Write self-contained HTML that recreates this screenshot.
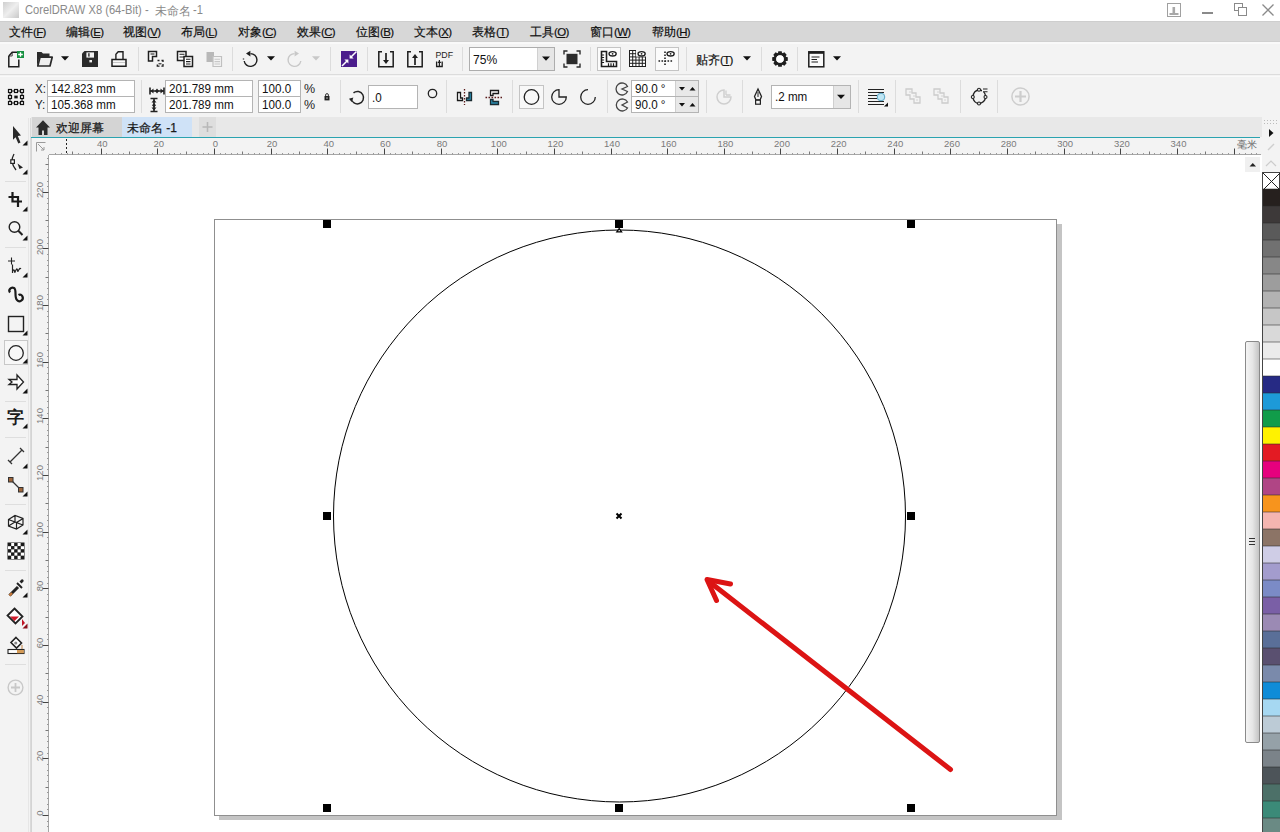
<!DOCTYPE html><html><head><meta charset="utf-8"><style>
*{margin:0;padding:0;box-sizing:border-box}
html,body{width:1280px;height:832px;overflow:hidden;background:#f3f3f3;font-family:"Liberation Sans",sans-serif;position:relative}
.abs{position:absolute}
svg{position:absolute;overflow:visible}
.mi{position:absolute;top:24px;font-size:12px;color:#111;white-space:nowrap;letter-spacing:0px;-webkit-text-stroke:0.2px #111}
.n{display:inline-block;transform:scaleX(.93);transform-origin:0 50%}
.pp{letter-spacing:-0.7px;font-size:11.5px}
.sepv{position:absolute;width:1px;background:#dcdcdc}
.box{position:absolute;background:#fff;border:1px solid #b4b4b4;font-size:12.5px;color:#111;white-space:nowrap;overflow:hidden}
.rl{position:absolute;font-size:9.5px;color:#7a7a7a;white-space:nowrap}
</style></head><body>
<div class="abs" style="left:0;top:0;width:1280px;height:21px;background:#fff"></div>
<div class="abs" style="left:3px;top:2px;width:16px;height:16px;background:linear-gradient(135deg,#cfcfcf,#eee 50%,#c8c8c8)"></div>
<div class="abs" style="left:25px;top:3px;font-size:12px;color:#8a8a8a;white-space:nowrap"><span class="n">CorelDRAW X8 (64-Bit) -</span></div><div class="abs" style="left:155px;top:3px;font-size:12px;color:#8a8a8a;white-space:nowrap">未命名</div><div class="abs" style="left:193px;top:3px;font-size:12px;color:#8a8a8a;white-space:nowrap"><span class="n">-1</span></div>
<svg style="left:1160px;top:0" width="120" height="21"><rect x="7.5" y="3.5" width="13" height="13" fill="none" stroke="#a0a0a0"/><path d="M9.5 14h9" stroke="#a8a8a8" stroke-width="2"/><path d="M13.8 7v6" stroke="#a8a8a8" stroke-width="2.6"/><rect x="42" y="12" width="11" height="2" fill="#8a8a8a"/><rect x="74.5" y="3.5" width="8" height="7" fill="#fff" stroke="#8a8a8a"/><rect x="78.5" y="7.5" width="8" height="8" fill="#fff" stroke="#8a8a8a"/><path d="M102.5 4.5l11 11M113.5 4.5l-11 11" stroke="#8a8a8a" stroke-width="1.3"/></svg>
<div class="abs" style="left:0;top:21px;width:1280px;height:21px;background:#d7d7d7"></div>
<div class="mi" style="left:9px">文件<span class="pp">(<u>F</u>)</span></div>
<div class="mi" style="left:66px">编辑<span class="pp">(<u>E</u>)</span></div>
<div class="mi" style="left:123px">视图<span class="pp">(<u>V</u>)</span></div>
<div class="mi" style="left:181px">布局<span class="pp">(<u>L</u>)</span></div>
<div class="mi" style="left:238px">对象<span class="pp">(<u>C</u>)</span></div>
<div class="mi" style="left:297px">效果<span class="pp">(<u>C</u>)</span></div>
<div class="mi" style="left:356px">位图<span class="pp">(<u>B</u>)</span></div>
<div class="mi" style="left:414px">文本<span class="pp">(<u>X</u>)</span></div>
<div class="mi" style="left:472px">表格<span class="pp">(<u>T</u>)</span></div>
<div class="mi" style="left:530px">工具<span class="pp">(<u>O</u>)</span></div>
<div class="mi" style="left:590px">窗口<span class="pp">(<u>W</u>)</span></div>
<div class="mi" style="left:652px">帮助<span class="pp">(<u>H</u>)</span></div>
<div class="abs" style="left:0;top:42px;width:1280px;height:33px;background:#f3f3f3;border-bottom:1px solid #dcdcdc"></div>
<div class="abs" style="left:0;top:42px;width:1280px;height:2px;background:#f9f9f9"></div>
<div class="abs" style="left:0;top:21px;width:1280px;height:1px;background:#cecece"></div>
<div class="abs" style="left:0;top:41px;width:1280px;height:1px;background:#d0d0d0"></div>
<div class="sepv" style="left:138px;top:47px;height:24px"></div>
<div class="sepv" style="left:232px;top:47px;height:24px"></div>
<div class="sepv" style="left:330px;top:47px;height:24px"></div>
<div class="sepv" style="left:367px;top:47px;height:24px"></div>
<div class="sepv" style="left:462px;top:47px;height:24px"></div>
<div class="sepv" style="left:590px;top:47px;height:24px"></div>
<div class="sepv" style="left:686px;top:47px;height:24px"></div>
<div class="sepv" style="left:761px;top:47px;height:24px"></div>
<div class="sepv" style="left:797px;top:47px;height:24px"></div>
<svg style="left:7px;top:50px" width="18" height="18"><path d="M1.8 6L5.2 2.2H10.2M11.8 9.5v7.3H1.8V6" fill="none" stroke="#1e1e1e" stroke-width="1.5"/><path d="M5.2 2.2V6H1.8" fill="none" stroke="#1e1e1e" stroke-width="0.8"/><rect x="10" y="1" width="7" height="7" fill="#169040"/><path d="M13.5 2.2v4.6M11.2 4.5h4.6" stroke="#fff" stroke-width="1.3"/></svg>
<svg style="left:36px;top:50px" width="18" height="18"><path d="M1 16.8V2h4.5l1.5 1.5h6.5v3.5H3.5L1 16.8Z" fill="#2a2a2a"/><path d="M1.8 16L4 7.2h12.2L14 16Z" fill="#eeeeee" stroke="#2a2a2a" stroke-width="1.7" stroke-linejoin="round"/></svg>
<svg style="left:60px;top:55px" width="10" height="6"><path d="M1 1.2h8L5 5.4Z" fill="#111"/></svg>
<svg style="left:81px;top:50px" width="18" height="18"><path d="M3.5 1H17V17H1V3.5Z" fill="#2b2b2b"/><rect x="5.4" y="2.4" width="7.6" height="5.2" fill="#f3f3f3"/><rect x="7.2" y="3.2" width="1.4" height="3.4" fill="#2b2b2b"/><rect x="8.4" y="10" width="2.6" height="2.4" fill="#f3f3f3"/></svg>
<svg style="left:110px;top:50px" width="18" height="18"><path d="M5.9 10V4.2L8.2 1.8h4.8V10" fill="#f6f6f6" stroke="#1e1e1e" stroke-width="1.4"/><path d="M2 9.5h14v6.8H2Z" fill="#fafafa" stroke="#1e1e1e" stroke-width="1.5"/><path d="M3 12.5h12" stroke="#bbb" stroke-width="0.8"/></svg>
<svg style="left:147px;top:50px" width="18" height="18"><path d="M1.5 1.5h8v5h-4v4.5h-4Z" fill="#fff" stroke="#1e1e1e" stroke-width="1.5"/><path d="M3.5 4h4" stroke="#1e1e1e" stroke-width="1.1"/><path d="M10.5 10.5h2M14.5 10.5h1.5v1.5M16 14v2.2h-1.6M12.5 16.2h-2.2v-1.6" fill="none" stroke="#1e1e1e" stroke-width="1.3"/><path d="M11.5 13.8h3" stroke="#1e1e1e" stroke-width="1.1"/></svg>
<svg style="left:176px;top:50px" width="18" height="18"><path d="M1.5 1.5h8.5v9H1.5Z" fill="#fff" stroke="#1e1e1e" stroke-width="1.5"/><path d="M3.5 4.2h5M3.5 7h5" stroke="#1e1e1e" stroke-width="1.1"/><path d="M8 6.5h8.5v10H8Z" fill="#fff" stroke="#1e1e1e" stroke-width="1.5"/><path d="M10 9.2h4.5M10 11.6h4.5M10 14h4.5" stroke="#1e1e1e" stroke-width="1.1"/></svg>
<svg style="left:205px;top:50px" width="18" height="18"><path d="M1.5 2h7.5v10H1.5Z" fill="#b8b8b8"/><path d="M8 6.5h8.5v10H8Z" fill="#f3f3f3" stroke="#c0c0c0" stroke-width="1.2"/><path d="M9.5 9.2h5.5M9.5 11.6h5.5M9.5 14h5.5" stroke="#c8c8c8" stroke-width="1.1"/></svg>
<svg style="left:241px;top:50px" width="18" height="18"><path d="M9.5 3.6A6.4 6.4 0 1 1 3.2 11" fill="none" stroke="#1e1e1e" stroke-width="1.4"/><path d="M9.4 0.8L5 3.6L9.4 6.4Z" fill="#1e1e1e"/><path d="M2.5 8.5v1" stroke="#1e1e1e" stroke-width="1.4"/></svg>
<svg style="left:266px;top:55px" width="10" height="6"><path d="M1 1.2h8L5 5.4Z" fill="#111"/></svg>
<svg style="left:286px;top:50px" width="18" height="18"><path d="M8.5 3.6A6.4 6.4 0 1 0 14.8 11" fill="none" stroke="#c8c8c8" stroke-width="1.4"/><path d="M8.6 0.8L13 3.6L8.6 6.4Z" fill="#c8c8c8"/></svg>
<svg style="left:311px;top:55px" width="10" height="6"><path d="M1 1.2h8L5 5.4Z" fill="#c8c8c8"/></svg>
<svg style="left:340px;top:50px" width="18" height="18"><rect x="1" y="1" width="16" height="16" fill="#4b1d8c"/><path d="M16.5 1.5L10.5 7.5M2 16L7.5 10.5" stroke="#fff" stroke-width="1.5"/><path d="M9.6 4.4v4h4Z" fill="#fff"/><path d="M8.4 13.6v-4h-4Z" fill="#fff"/></svg>
<svg style="left:377px;top:50px" width="18" height="18"><path d="M5 1.8H1.8v15h14.4v-15H13" fill="none" stroke="#1e1e1e" stroke-width="1.5"/><path d="M9 3v8" stroke="#1e1e1e" stroke-width="1.7"/><path d="M6 10h6L9 14Z" fill="#1e1e1e"/></svg>
<svg style="left:406px;top:50px" width="18" height="18"><path d="M5 1.8H1.8v15h14.4v-15H13" fill="none" stroke="#1e1e1e" stroke-width="1.5"/><path d="M9 7v8" stroke="#1e1e1e" stroke-width="1.7"/><path d="M6 8h6L9 4Z" fill="#1e1e1e"/></svg>
<svg style="left:434px;top:50px" width="20" height="18"><text x="1.5" y="8" font-family="Liberation Sans" font-size="8.8" fill="#1e1e1e">PDF</text><path d="M2.6 11.5v5h5.6v-5" fill="none" stroke="#1e1e1e" stroke-width="1.3"/><path d="M5.4 10v6" stroke="#1e1e1e" stroke-width="1.2"/><path d="M3.4 13l2-2.5l2 2.5Z" fill="#1e1e1e"/></svg>
<div class="box" style="left:469px;top:47px;width:86px;height:24px;border-color:#adadad"><span class="n" style="position:absolute;left:3px;top:4px;font-size:13px">75%</span><div style="position:absolute;left:67px;top:0;width:17px;height:22px;background:#e6e6e6;border-left:1px solid #d0d0d0"></div></div>
<svg style="left:541px;top:56px" width="10" height="6"><path d="M1 0.6h8L5 4.8Z" fill="#111"/></svg>
<svg style="left:563px;top:50px" width="18" height="18"><rect x="3.5" y="3.8" width="11" height="10.4" fill="#2b2b2b"/><path d="M1 4.5V1h3.5M13.5 1H17v3.5M17 13.5V17h-3.5M4.5 17H1v-3.5" fill="none" stroke="#2b2b2b" stroke-width="1.4"/></svg>
<div class="abs" style="left:597px;top:47px;width:24px;height:24px;border:1px solid #c4c4c4;background:#fbfbfb"></div>
<div class="abs" style="left:655px;top:47px;width:24px;height:24px;border:1px solid #c4c4c4;background:#fbfbfb"></div>
<svg style="left:600px;top:50px" width="18" height="18"><path d="M1.5 1.5v15h15v-5H6.5V1.5Z" fill="#fff" stroke="#1e1e1e" stroke-width="1.6"/><path d="M1.5 5h2.6M1.5 7.5h2.6M1.5 10h2.6M1.5 12.5h2.6M8.5 16v-2.8M11 16v-2.8M13.5 16v-2.8" stroke="#1e1e1e" stroke-width="1.2"/><ellipse cx="12.6" cy="3.8" rx="3.6" ry="2.2" fill="#fff" stroke="#1e1e1e" stroke-width="1.3"/><circle cx="12.6" cy="3.8" r="0.9" fill="#1e1e1e"/></svg>
<svg style="left:629px;top:50px" width="18" height="18"><rect x="0" y="0" width="17" height="17" fill="#1e1e1e"/><rect x="1.0" y="1.0" width="2.2" height="2.2" fill="#fff"/><rect x="1.0" y="4.2" width="2.2" height="2.2" fill="#fff"/><rect x="1.0" y="7.4" width="2.2" height="2.2" fill="#fff"/><rect x="1.0" y="10.6" width="2.2" height="2.2" fill="#fff"/><rect x="1.0" y="13.8" width="2.2" height="2.2" fill="#fff"/><rect x="4.2" y="1.0" width="2.2" height="2.2" fill="#fff"/><rect x="4.2" y="4.2" width="2.2" height="2.2" fill="#fff"/><rect x="4.2" y="7.4" width="2.2" height="2.2" fill="#fff"/><rect x="4.2" y="10.6" width="2.2" height="2.2" fill="#fff"/><rect x="4.2" y="13.8" width="2.2" height="2.2" fill="#fff"/><rect x="7.4" y="1.0" width="2.2" height="2.2" fill="#fff"/><rect x="7.4" y="4.2" width="2.2" height="2.2" fill="#fff"/><rect x="7.4" y="7.4" width="2.2" height="2.2" fill="#fff"/><rect x="7.4" y="10.6" width="2.2" height="2.2" fill="#fff"/><rect x="7.4" y="13.8" width="2.2" height="2.2" fill="#fff"/><rect x="10.6" y="1.0" width="2.2" height="2.2" fill="#fff"/><rect x="10.6" y="4.2" width="2.2" height="2.2" fill="#fff"/><rect x="10.6" y="7.4" width="2.2" height="2.2" fill="#fff"/><rect x="10.6" y="10.6" width="2.2" height="2.2" fill="#fff"/><rect x="10.6" y="13.8" width="2.2" height="2.2" fill="#fff"/><rect x="13.8" y="1.0" width="2.2" height="2.2" fill="#fff"/><rect x="13.8" y="4.2" width="2.2" height="2.2" fill="#fff"/><rect x="13.8" y="7.4" width="2.2" height="2.2" fill="#fff"/><rect x="13.8" y="10.6" width="2.2" height="2.2" fill="#fff"/><rect x="13.8" y="13.8" width="2.2" height="2.2" fill="#fff"/><rect x="7" y="0" width="11" height="6.5" fill="#f3f3f3"/><ellipse cx="12.6" cy="3.8" rx="3.6" ry="2.2" fill="#fff" stroke="#1e1e1e" stroke-width="1.3"/><circle cx="12.6" cy="3.8" r="0.9" fill="#1e1e1e"/></svg>
<svg style="left:658px;top:50px" width="18" height="18"><path d="M7 1.5v15M0.5 11h15" stroke="#1e1e1e" stroke-width="1.6" stroke-dasharray="1.6 1.4"/><ellipse cx="12.6" cy="3.8" rx="3.6" ry="2.2" fill="#fff" stroke="#1e1e1e" stroke-width="1.3"/><circle cx="12.6" cy="3.8" r="0.9" fill="#1e1e1e"/></svg>
<div class="abs" style="left:696px;top:52px;font-size:12px;color:#111;white-space:nowrap;-webkit-text-stroke:0.2px #111">贴齐<span class="pp">(<u>T</u>)</span></div>
<svg style="left:742px;top:55px" width="10" height="6"><path d="M1 1.2h8L5 5.4Z" fill="#111"/></svg>
<svg style="left:771px;top:50px" width="18" height="18"><rect x="7.1" y="1.2" width="3.8" height="4" rx="0.6" fill="#1e1e1e" transform="rotate(0 9 9)"/><rect x="7.1" y="1.2" width="3.8" height="4" rx="0.6" fill="#1e1e1e" transform="rotate(45 9 9)"/><rect x="7.1" y="1.2" width="3.8" height="4" rx="0.6" fill="#1e1e1e" transform="rotate(90 9 9)"/><rect x="7.1" y="1.2" width="3.8" height="4" rx="0.6" fill="#1e1e1e" transform="rotate(135 9 9)"/><rect x="7.1" y="1.2" width="3.8" height="4" rx="0.6" fill="#1e1e1e" transform="rotate(180 9 9)"/><rect x="7.1" y="1.2" width="3.8" height="4" rx="0.6" fill="#1e1e1e" transform="rotate(225 9 9)"/><rect x="7.1" y="1.2" width="3.8" height="4" rx="0.6" fill="#1e1e1e" transform="rotate(270 9 9)"/><rect x="7.1" y="1.2" width="3.8" height="4" rx="0.6" fill="#1e1e1e" transform="rotate(315 9 9)"/><circle cx="9" cy="9" r="5.1" fill="none" stroke="#1e1e1e" stroke-width="2.6"/><circle cx="9" cy="9" r="3.8" fill="#fff"/></svg>
<svg style="left:807px;top:50px" width="20" height="18"><rect x="1.8" y="1.8" width="15" height="15" fill="#fafafa" stroke="#1e1e1e" stroke-width="1.5"/><rect x="1.8" y="1.8" width="15" height="2" fill="#1e1e1e"/><path d="M4.5 7h8M4.5 9.5h5.5M4.5 12h6.5" stroke="#1e1e1e" stroke-width="1.1"/></svg>
<svg style="left:832px;top:55px" width="10" height="6"><path d="M1 1.2h8L5 5.4Z" fill="#111"/></svg>
<div class="abs" style="left:0;top:76px;width:1280px;height:42px;background:#f3f3f3;border-top:1px solid #f9f9f9"></div>
<div class="sepv" style="left:141px;top:80px;height:33px"></div>
<div class="sepv" style="left:340px;top:80px;height:33px"></div>
<div class="sepv" style="left:446px;top:80px;height:33px"></div>
<div class="sepv" style="left:512px;top:80px;height:33px"></div>
<div class="sepv" style="left:607px;top:80px;height:33px"></div>
<div class="sepv" style="left:706px;top:80px;height:33px"></div>
<div class="sepv" style="left:742px;top:80px;height:33px"></div>
<div class="sepv" style="left:858px;top:80px;height:33px"></div>
<div class="sepv" style="left:895px;top:80px;height:33px"></div>
<div class="sepv" style="left:960px;top:80px;height:33px"></div>
<div class="sepv" style="left:997px;top:80px;height:33px"></div>
<svg style="left:7px;top:88px" width="18" height="18"><path d="M3 3h12v12H3Z" fill="none" stroke="#111" stroke-width="1"/><rect x="1.5" y="1.5" width="3" height="3" fill="#fff" stroke="#111" stroke-width="1.2"/><rect x="1.5" y="7.5" width="3" height="3" fill="#fff" stroke="#111" stroke-width="1.2"/><rect x="1.5" y="13.5" width="3" height="3" fill="#fff" stroke="#111" stroke-width="1.2"/><rect x="7.5" y="1.5" width="3" height="3" fill="#fff" stroke="#111" stroke-width="1.2"/><rect x="7.5" y="13.5" width="3" height="3" fill="#fff" stroke="#111" stroke-width="1.2"/><rect x="13.5" y="1.5" width="3" height="3" fill="#fff" stroke="#111" stroke-width="1.2"/><rect x="13.5" y="7.5" width="3" height="3" fill="#fff" stroke="#111" stroke-width="1.2"/><rect x="13.5" y="13.5" width="3" height="3" fill="#fff" stroke="#111" stroke-width="1.2"/><rect x="7.3" y="7.6" width="3.4" height="2.8" fill="#111"/></svg>
<div class="abs" style="left:35px;top:82px;font-size:12.5px;color:#222"><span class="n">X:</span></div>
<div class="abs" style="left:35px;top:98px;font-size:12.5px;color:#222"><span class="n">Y:</span></div>
<div class="box" style="left:47px;top:80px;width:88px;height:17px"><span class="n" style="position:absolute;left:3px;top:1px">142.823 mm</span></div>
<div class="box" style="left:47px;top:96px;width:88px;height:17px"><span class="n" style="position:absolute;left:3px;top:1px">105.368 mm</span></div>
<svg style="left:148px;top:86px" width="18" height="10"><path d="M2 1.5v7M16 1.5v7M2 5h14" stroke="#222" stroke-width="1.6"/><path d="M2.5 5l3-2.5v5Z M15.5 5l-3-2.5v5Z M9 2.5l2 2.5l-2 2.5l-2-2.5Z" fill="#222"/></svg>
<svg style="left:149px;top:97px" width="10" height="16"><path d="M1.5 1.5h7M1.5 14.5h7M5 1.5v13" stroke="#222" stroke-width="1.6"/><path d="M5 2.5l-2.5 3h5Z M5 13.5l-2.5-3h5Z M5 6l2 2.2l-2 2.2l-2-2.2Z" fill="#222"/></svg>
<div class="box" style="left:165px;top:80px;width:88px;height:17px"><span class="n" style="position:absolute;left:3px;top:1px">201.789 mm</span></div>
<div class="box" style="left:165px;top:96px;width:88px;height:17px"><span class="n" style="position:absolute;left:3px;top:1px">201.789 mm</span></div>
<div class="box" style="left:258px;top:80px;width:43px;height:17px"><span class="n" style="position:absolute;left:3px;top:1px">100.0</span></div>
<div class="box" style="left:258px;top:96px;width:43px;height:17px"><span class="n" style="position:absolute;left:3px;top:1px">100.0</span></div>
<div class="abs" style="left:304px;top:82px;font-size:12.5px;color:#222">%</div>
<div class="abs" style="left:304px;top:98px;font-size:12.5px;color:#222">%</div>
<svg style="left:322px;top:92px" width="10" height="10"><path d="M3.6 4V3a1.4 1.4 0 0 1 2.8 0V4" fill="none" stroke="#222" stroke-width="0.9"/><rect x="2.5" y="4" width="5" height="4.4" fill="#222"/><rect x="4.6" y="5.3" width="0.8" height="1.6" fill="#fff"/></svg>
<svg style="left:348px;top:88px" width="18" height="18"><path d="M5.5 4.8A6.2 6.2 0 1 1 3.2 10.5" fill="none" stroke="#222" stroke-width="1.5"/><path d="M1 10.8L5.4 9.6L3.6 14Z" fill="#222"/></svg>
<div class="box" style="left:368px;top:85px;width:50px;height:24px"><span class="n" style="position:absolute;left:3px;top:1px"><span style="position:relative;top:4px">.0</span></span></div>
<svg style="left:426px;top:87px" width="14" height="14"><circle cx="6.5" cy="6.5" r="4.2" fill="none" stroke="#222" stroke-width="1.3"/></svg>
<svg style="left:0;top:0" width="1280" height="120"><path d="M457.5 92.5h3v5.5h2v2.5h-5Z" fill="#fff" stroke="#1a1a1a" stroke-width="1.3"/><path d="M464.5 89v16" stroke="#5a1a1a" stroke-width="1.3" stroke-dasharray="1.6 1.4"/><path d="M469 92.5h2.5v8h-5v-2.5h2.5Z" fill="#2a8db0" stroke="#1a2a30" stroke-width="1.3"/><path d="M490.5 90.5h8v3h-5.5v2h-2.5Z" fill="#fff" stroke="#1a1a1a" stroke-width="1.3"/><path d="M485.5 97.5h16.5" stroke="#5a1a1a" stroke-width="1.3" stroke-dasharray="1.6 1.4"/><path d="M490.5 99.5h2.5v2h5.5v3h-8Z" fill="#2a8db0" stroke="#1a2a30" stroke-width="1.3"/></svg>
<div class="abs" style="left:519px;top:85px;width:25px;height:24px;border:1px solid #c4c4c4;background:#f8f8f8"></div>
<svg style="left:522px;top:88px" width="18" height="18"><circle cx="9.5" cy="9" r="7.3" fill="none" stroke="#222" stroke-width="1.3"/></svg>
<svg style="left:550px;top:88px" width="18" height="18"><path d="M9 9V1.7A7.3 7.3 0 1 0 16.3 9Z" fill="none" stroke="#222" stroke-width="1.3"/></svg>
<svg style="left:579px;top:88px" width="18" height="18"><path d="M9 1.7A7.3 7.3 0 1 0 16.3 9" fill="none" stroke="#222" stroke-width="1.3"/></svg>
<svg style="left:614px;top:81px" width="16" height="15"><path d="M13.5 5.5A6 6 0 1 0 13.5 10.5L8 8Z" fill="#f3f3f3" stroke="#444" stroke-width="1.3"/></svg>
<svg style="left:614px;top:97px" width="16" height="15"><path d="M13.5 5A6 6 0 1 0 13.5 11L8 8Z" fill="#f3f3f3" stroke="#444" stroke-width="1.3"/></svg>
<div class="box" style="left:631px;top:80px;width:68px;height:17px"><span class="n" style="position:absolute;left:3px;top:1px">90.0 °</span><div style="position:absolute;left:43px;top:0;width:24px;height:16px;background:#e8e8e8;border-left:1px solid #cfcfcf"></div></div>
<div class="box" style="left:631px;top:96px;width:68px;height:17px"><span class="n" style="position:absolute;left:3px;top:1px">90.0 °</span><div style="position:absolute;left:43px;top:0;width:24px;height:16px;background:#e8e8e8;border-left:1px solid #cfcfcf"></div></div>
<svg style="left:677px;top:86px" width="22" height="6"><path d="M2 1h6L5 4.4Z" fill="#111"/><path d="M12.5 4.4h6L15.5 1Z" fill="#111"/></svg>
<svg style="left:677px;top:102px" width="22" height="6"><path d="M2 1h6L5 4.4Z" fill="#111"/><path d="M12.5 4.4h6L15.5 1Z" fill="#111"/></svg>
<svg style="left:715px;top:88px" width="19" height="18"><path d="M9 9V2A7 7 0 1 0 16 9Z" fill="none" stroke="#cfcfcf" stroke-width="1.5"/><path d="M11 7V2.5M11 7h4.5" stroke="#cfcfcf" stroke-width="1.3"/></svg>
<svg style="left:752px;top:88px" width="12" height="18"><path d="M6 1L9.5 8.5L8 12H4L2.5 8.5Z" fill="#f3f3f3" stroke="#222" stroke-width="1.3"/><path d="M6 4v5" stroke="#222" stroke-width="1"/><rect x="3.6" y="12.2" width="4.8" height="4" fill="#f3f3f3" stroke="#222" stroke-width="1.2"/></svg>
<div class="box" style="left:771px;top:85px;width:80px;height:24px"><span class="n" style="position:absolute;left:3px;top:4px">.2 mm</span><div style="position:absolute;left:61px;top:0;width:18px;height:22px;background:#e6e6e6;border-left:1px solid #cfcfcf"></div></div>
<svg style="left:836px;top:94px" width="10" height="6"><path d="M1 0.8h8L5 5Z" fill="#111"/></svg>
<svg style="left:866px;top:87px" width="24" height="20"><path d="M2 2.5h16M2 5.5h16M2 8.5h9M2 11.5h9M2 14.5h16M2 17.5h16" stroke="#222" stroke-width="1.2"/><circle cx="15" cy="10" r="3.8" fill="#bfe6f4" stroke="#5aa7c8" stroke-width="1"/><path d="M18 19.5h4v-4Z" fill="#111"/></svg>
<svg style="left:904px;top:87px" width="18" height="18"><path d="M2 2h6v4h4v4h4v6h-6v-4H6V8H2Z" fill="none" stroke="#cccccc" stroke-width="1.3"/><path d="M5 5h3M9 9h3M12 13h2" stroke="#d4d4d4" stroke-width="1"/></svg>
<svg style="left:932px;top:87px" width="18" height="18"><path d="M2 2h6v4h4v4h4v6h-6v-4H6V8H2Z" fill="none" stroke="#cccccc" stroke-width="1.3"/><path d="M5 5h3M9 9h3M12 13h2" stroke="#d4d4d4" stroke-width="1"/></svg>
<svg style="left:969px;top:87px" width="20" height="20"><path d="M4 10C4 5.5 7 3 10 3C14 3 16.5 6 16.5 10C16.5 13.5 13.5 16.5 10 16.5C6.5 16.5 4 13.5 4 10Z" fill="none" stroke="#222" stroke-width="1.3"/><circle cx="3.8" cy="10" r="1.5" fill="#f3f3f3" stroke="#222" stroke-width="1.1"/><circle cx="10" cy="16.5" r="1.5" fill="#f3f3f3" stroke="#222" stroke-width="1.1"/><circle cx="10" cy="2.8" r="1.5" fill="#f3f3f3" stroke="#222" stroke-width="1.1"/><circle cx="16.5" cy="10" r="1.5" fill="#f3f3f3" stroke="#222" stroke-width="1.1"/><rect x="13" y="1" width="6" height="4" fill="#f3f3f3"/><path d="M14 2h4.5M14 4.8h4.5" stroke="#222" stroke-width="1.1"/></svg>
<svg style="left:1010px;top:86px" width="21" height="21"><circle cx="10.5" cy="10.5" r="8.6" fill="none" stroke="#cdcdcd" stroke-width="1.5"/><path d="M10.5 5v11M5 10.5h11" stroke="#cdcdcd" stroke-width="2.2"/></svg>
<div class="abs" style="left:31px;top:117px;width:1231px;height:20px;background:#e8e8e8"></div>
<div class="abs" style="left:32px;top:117px;width:90px;height:20px;background:#d4d4d4"></div>
<div class="abs" style="left:122px;top:117px;width:70px;height:20px;background:#cfe2f7"></div>
<div class="abs" style="left:199px;top:117px;width:17px;height:20px;background:#dedede"></div>
<div class="abs" style="left:56px;top:120px;font-size:12px;color:#1a1a1a;-webkit-text-stroke:0.25px #1a1a1a;white-space:nowrap">欢迎屏幕</div>
<div class="abs" style="left:127px;top:120px;font-size:12px;color:#1a1a1a;-webkit-text-stroke:0.25px #1a1a1a;white-space:nowrap">未命名 -1</div>
<div class="abs" style="left:31px;top:137px;width:1229px;height:1px;background:#2aa3b0"></div>
<div class="abs" style="left:0;top:118px;width:31px;height:714px;background:#f3f3f3;border-right:1px solid #dadada"></div>
<div class="abs" style="left:5px;top:181px;width:21px;height:1px;background:#dedede"></div>
<div class="abs" style="left:5px;top:247px;width:21px;height:1px;background:#dedede"></div>
<div class="abs" style="left:5px;top:401px;width:21px;height:1px;background:#dedede"></div>
<div class="abs" style="left:5px;top:437px;width:21px;height:1px;background:#dedede"></div>
<div class="abs" style="left:5px;top:504px;width:21px;height:1px;background:#dedede"></div>
<div class="abs" style="left:5px;top:570px;width:21px;height:1px;background:#dedede"></div>
<div class="abs" style="left:5px;top:664px;width:21px;height:1px;background:#dedede"></div>
<div class="abs" style="left:28px;top:118px;width:1px;height:714px;background:#e6e6e6"></div>
<svg style="left:11px;top:125px" width="12" height="20"><path d="M2 1L10 10.5L6.8 11L9.5 17.5L7.3 18.5L4.6 12.2L2 14.8Z" fill="#2a2a2a"/></svg>
<svg style="left:22px;top:140px" width="6" height="6"><path d="M5.5 0.5V5.5H0.5Z" fill="#111"/></svg>
<svg style="left:8px;top:152px" width="18" height="20"><path d="M6 2C3 7 4 13 8 18" fill="none" stroke="#222" stroke-width="1.3"/><rect x="2.8" y="7.8" width="3.6" height="3.6" fill="#fff" stroke="#222" stroke-width="1.2"/><path d="M9.5 11.5L15 15.5L11.5 17Z" fill="#222"/></svg>
<svg style="left:22px;top:169px" width="6" height="6"><path d="M5.5 0.5V5.5H0.5Z" fill="#111"/></svg>
<svg style="left:8px;top:191px" width="18" height="18"><path d="M4.5 1v9.5h9.5M0.5 6h9.5v10" fill="none" stroke="#1a1a1a" stroke-width="2.2"/></svg>
<svg style="left:22px;top:206px" width="6" height="6"><path d="M5.5 0.5V5.5H0.5Z" fill="#111"/></svg>
<svg style="left:8px;top:220px" width="18" height="18"><circle cx="6.5" cy="7" r="5.3" fill="none" stroke="#222" stroke-width="1.4"/><path d="M10.3 10.8L14.5 15" stroke="#222" stroke-width="2"/></svg>
<svg style="left:22px;top:235px" width="6" height="6"><path d="M5.5 0.5V5.5H0.5Z" fill="#111"/></svg>
<svg style="left:8px;top:256px" width="18" height="18"><path d="M3.5 1.5v7M0 5h7" stroke="#222" stroke-width="1.1"/><path d="M4.5 8.5v8.5c0-3 1.5-4 2-2s0 2 1 0s1.5-3 2-1s0 2 1.2 0s1.6-2 2.2-1" fill="none" stroke="#222" stroke-width="1.2"/></svg>
<svg style="left:22px;top:272px" width="6" height="6"><path d="M5.5 0.5V5.5H0.5Z" fill="#111"/></svg>
<svg style="left:7px;top:286px" width="18" height="20"><path d="M3 6.5C1 4 4 0.5 7 2C10 3.5 7 11 10 14C12.5 17 17 14 15.5 10.5C14.8 9 13 8 11.5 9" fill="none" stroke="#1a1a1a" stroke-width="2.2"/></svg>
<svg style="left:7px;top:315px" width="18" height="18"><rect x="1.5" y="1.5" width="15" height="15" fill="none" stroke="#222" stroke-width="1.4"/></svg>
<svg style="left:22px;top:330px" width="6" height="6"><path d="M5.5 0.5V5.5H0.5Z" fill="#111"/></svg>
<div class="abs" style="left:4px;top:340px;width:24px;height:25px;border:1px solid #c8c8c8;background:#f7f7f7"></div>
<svg style="left:7px;top:344px" width="18" height="18"><circle cx="9" cy="9" r="7.3" fill="none" stroke="#222" stroke-width="1.3"/></svg>
<svg style="left:22px;top:358px" width="6" height="6"><path d="M5.5 0.5V5.5H0.5Z" fill="#111"/></svg>
<svg style="left:7px;top:373px" width="18" height="18"><path d="M2 6.5h8V2l6.5 7l-6.5 7v-4.5H2l3-2.5Z" fill="#fff" stroke="#222" stroke-width="1.3" stroke-linejoin="miter"/></svg>
<svg style="left:22px;top:388px" width="6" height="6"><path d="M5.5 0.5V5.5H0.5Z" fill="#111"/></svg>
<div class="abs" style="left:7px;top:408px;font-size:17px;font-weight:bold;color:#1a1a1a;line-height:20px">字</div>
<svg style="left:22px;top:423px" width="6" height="6"><path d="M5.5 0.5V5.5H0.5Z" fill="#111"/></svg>
<svg style="left:7px;top:447px" width="18" height="18"><path d="M3 15L15 3M1 13l4 4M13 1l4 4" stroke="#333" stroke-width="1.3"/></svg>
<svg style="left:22px;top:463px" width="6" height="6"><path d="M5.5 0.5V5.5H0.5Z" fill="#111"/></svg>
<svg style="left:7px;top:476px" width="18" height="18"><path d="M4 4L14 14" stroke="#333" stroke-width="1.3"/><rect x="1.5" y="1.5" width="4.5" height="4.5" fill="#a0663a" stroke="#333" stroke-width="1"/><rect x="11.5" y="11.5" width="4.5" height="4.5" fill="#a0663a" stroke="#333" stroke-width="1"/></svg>
<svg style="left:22px;top:491px" width="6" height="6"><path d="M5.5 0.5V5.5H0.5Z" fill="#111"/></svg>
<svg style="left:7px;top:513px" width="18" height="18"><path d="M1.5 6.5L8 2.5L16 5.5V12L9.5 16L1.5 13Z M1.5 6.5L9.5 9.5L16 5.5 M9.5 9.5V16 M1.5 13L8 9M8 2.5V9L16 12" fill="none" stroke="#222" stroke-width="1.2"/></svg>
<svg style="left:22px;top:529px" width="6" height="6"><path d="M5.5 0.5V5.5H0.5Z" fill="#111"/></svg>
<svg style="left:7px;top:542px" width="18" height="18"><rect x="0.5" y="0.5" width="17" height="17" fill="#1a1a1a"/><rect x="1.0" y="1.0" width="3.2" height="3.2" fill="#1a1a1a"/><rect x="1.0" y="4.2" width="3.2" height="3.2" fill="#fff"/><rect x="1.0" y="7.4" width="3.2" height="3.2" fill="#1a1a1a"/><rect x="1.0" y="10.6" width="3.2" height="3.2" fill="#fff"/><rect x="1.0" y="13.8" width="3.2" height="3.2" fill="#1a1a1a"/><rect x="4.2" y="1.0" width="3.2" height="3.2" fill="#fff"/><rect x="4.2" y="4.2" width="3.2" height="3.2" fill="#1a1a1a"/><rect x="4.2" y="7.4" width="3.2" height="3.2" fill="#fff"/><rect x="4.2" y="10.6" width="3.2" height="3.2" fill="#1a1a1a"/><rect x="4.2" y="13.8" width="3.2" height="3.2" fill="#fff"/><rect x="7.4" y="1.0" width="3.2" height="3.2" fill="#1a1a1a"/><rect x="7.4" y="4.2" width="3.2" height="3.2" fill="#fff"/><rect x="7.4" y="7.4" width="3.2" height="3.2" fill="#1a1a1a"/><rect x="7.4" y="10.6" width="3.2" height="3.2" fill="#fff"/><rect x="7.4" y="13.8" width="3.2" height="3.2" fill="#1a1a1a"/><rect x="10.6" y="1.0" width="3.2" height="3.2" fill="#fff"/><rect x="10.6" y="4.2" width="3.2" height="3.2" fill="#1a1a1a"/><rect x="10.6" y="7.4" width="3.2" height="3.2" fill="#fff"/><rect x="10.6" y="10.6" width="3.2" height="3.2" fill="#1a1a1a"/><rect x="10.6" y="13.8" width="3.2" height="3.2" fill="#fff"/><rect x="13.8" y="1.0" width="3.2" height="3.2" fill="#1a1a1a"/><rect x="13.8" y="4.2" width="3.2" height="3.2" fill="#fff"/><rect x="13.8" y="7.4" width="3.2" height="3.2" fill="#1a1a1a"/><rect x="13.8" y="10.6" width="3.2" height="3.2" fill="#fff"/><rect x="13.8" y="13.8" width="3.2" height="3.2" fill="#1a1a1a"/></svg>
<svg style="left:7px;top:578px" width="18" height="20"><path d="M2.5 17.5L11 9" stroke="#222" stroke-width="3"/><path d="M2.5 17.5L5 15" stroke="#c87a3a" stroke-width="2.4"/><path d="M10 5L15 10" stroke="#222" stroke-width="2"/><path d="M12.5 3.5L14.5 1.5a1.5 1.5 0 0 1 2 2L14.5 5.5Z" fill="#222"/></svg>
<svg style="left:22px;top:592px" width="6" height="6"><path d="M5.5 0.5V5.5H0.5Z" fill="#111"/></svg>
<svg style="left:6px;top:607px" width="22" height="22"><path d="M8.5 1.5L16.5 9.5L9.5 16.5L1.5 8.5Z" fill="#fff" stroke="#222" stroke-width="1.8"/><path d="M4 9.5h9L8.5 14Z" fill="#d01a2a"/><path d="M16 12l3 4l-3 3Z" fill="#c01525"/><path d="M21.5 16.5v5h-5Z" fill="#8a0f1a"/></svg>
<svg style="left:7px;top:636px" width="18" height="20"><path d="M9 1.5L14.5 7L9.5 12L4 6.5Z" fill="#fff" stroke="#222" stroke-width="1.6"/><circle cx="8.8" cy="7" r="1.6" fill="#888"/><rect x="1" y="13.5" width="16" height="4" fill="#fff" stroke="#222" stroke-width="1.1"/><rect x="10" y="14" width="6.8" height="3.2" fill="#d49a55"/><path d="M15 9v4" stroke="#c08040" stroke-width="1"/></svg>
<svg style="left:7px;top:679px" width="18" height="18"><circle cx="8.5" cy="8.5" r="7.4" fill="none" stroke="#c8c8c8" stroke-width="1.4"/><path d="M8.5 4v9M4 8.5h9" stroke="#c8c8c8" stroke-width="1.8"/></svg>
<svg style="left:35px;top:119px" width="16" height="17"><path d="M8 1.2L1 8.5h2.5V16h3.5v-4.5h2V16h3.5V8.5H15Z" fill="#2b2b2b"/></svg>
<svg style="left:199px;top:118px" width="17" height="18"><path d="M8.5 4v10M3.5 9h10" stroke="#b8b8b8" stroke-width="1.6"/></svg>
<div class="abs" style="left:31px;top:138px;width:1231px;height:17px;background:#f3f3f3"></div>
<div class="abs" style="left:31px;top:138px;width:18px;height:694px;background:#f3f3f3;border-left:1px solid #d4d4d4"></div>
<svg style="left:0;top:0" width="1280" height="832"><rect x="49" y="154.5" width="1212" height="1" fill="#5a5a5a"/><rect x="48.5" y="155" width="1" height="677" fill="#5a5a5a"/><line x1="55.5" y1="153.0" x2="55.5" y2="154.5" stroke="#999" stroke-width="1"/><line x1="61.5" y1="153.0" x2="61.5" y2="154.5" stroke="#999" stroke-width="1"/><line x1="67.5" y1="153.0" x2="67.5" y2="154.5" stroke="#999" stroke-width="1"/><line x1="72.5" y1="151.5" x2="72.5" y2="154.5" stroke="#777" stroke-width="1"/><line x1="78.5" y1="153.0" x2="78.5" y2="154.5" stroke="#999" stroke-width="1"/><line x1="84.5" y1="153.0" x2="84.5" y2="154.5" stroke="#999" stroke-width="1"/><line x1="89.5" y1="153.0" x2="89.5" y2="154.5" stroke="#999" stroke-width="1"/><line x1="95.5" y1="153.0" x2="95.5" y2="154.5" stroke="#999" stroke-width="1"/><line x1="101.5" y1="148.5" x2="101.5" y2="154.5" stroke="#444" stroke-width="1"/><line x1="106.5" y1="153.0" x2="106.5" y2="154.5" stroke="#999" stroke-width="1"/><line x1="112.5" y1="153.0" x2="112.5" y2="154.5" stroke="#999" stroke-width="1"/><line x1="118.5" y1="153.0" x2="118.5" y2="154.5" stroke="#999" stroke-width="1"/><line x1="123.5" y1="153.0" x2="123.5" y2="154.5" stroke="#999" stroke-width="1"/><line x1="129.5" y1="151.5" x2="129.5" y2="154.5" stroke="#777" stroke-width="1"/><line x1="135.5" y1="153.0" x2="135.5" y2="154.5" stroke="#999" stroke-width="1"/><line x1="140.5" y1="153.0" x2="140.5" y2="154.5" stroke="#999" stroke-width="1"/><line x1="146.5" y1="153.0" x2="146.5" y2="154.5" stroke="#999" stroke-width="1"/><line x1="152.5" y1="153.0" x2="152.5" y2="154.5" stroke="#999" stroke-width="1"/><line x1="157.5" y1="148.5" x2="157.5" y2="154.5" stroke="#444" stroke-width="1"/><line x1="163.5" y1="153.0" x2="163.5" y2="154.5" stroke="#999" stroke-width="1"/><line x1="169.5" y1="153.0" x2="169.5" y2="154.5" stroke="#999" stroke-width="1"/><line x1="174.5" y1="153.0" x2="174.5" y2="154.5" stroke="#999" stroke-width="1"/><line x1="180.5" y1="153.0" x2="180.5" y2="154.5" stroke="#999" stroke-width="1"/><line x1="186.5" y1="151.5" x2="186.5" y2="154.5" stroke="#777" stroke-width="1"/><line x1="191.5" y1="153.0" x2="191.5" y2="154.5" stroke="#999" stroke-width="1"/><line x1="197.5" y1="153.0" x2="197.5" y2="154.5" stroke="#999" stroke-width="1"/><line x1="203.5" y1="153.0" x2="203.5" y2="154.5" stroke="#999" stroke-width="1"/><line x1="208.5" y1="153.0" x2="208.5" y2="154.5" stroke="#999" stroke-width="1"/><line x1="214.5" y1="148.5" x2="214.5" y2="154.5" stroke="#444" stroke-width="1"/><line x1="220.5" y1="153.0" x2="220.5" y2="154.5" stroke="#999" stroke-width="1"/><line x1="225.5" y1="153.0" x2="225.5" y2="154.5" stroke="#999" stroke-width="1"/><line x1="231.5" y1="153.0" x2="231.5" y2="154.5" stroke="#999" stroke-width="1"/><line x1="237.5" y1="153.0" x2="237.5" y2="154.5" stroke="#999" stroke-width="1"/><line x1="242.5" y1="151.5" x2="242.5" y2="154.5" stroke="#777" stroke-width="1"/><line x1="248.5" y1="153.0" x2="248.5" y2="154.5" stroke="#999" stroke-width="1"/><line x1="254.5" y1="153.0" x2="254.5" y2="154.5" stroke="#999" stroke-width="1"/><line x1="259.5" y1="153.0" x2="259.5" y2="154.5" stroke="#999" stroke-width="1"/><line x1="265.5" y1="153.0" x2="265.5" y2="154.5" stroke="#999" stroke-width="1"/><line x1="271.5" y1="148.5" x2="271.5" y2="154.5" stroke="#444" stroke-width="1"/><line x1="276.5" y1="153.0" x2="276.5" y2="154.5" stroke="#999" stroke-width="1"/><line x1="282.5" y1="153.0" x2="282.5" y2="154.5" stroke="#999" stroke-width="1"/><line x1="288.5" y1="153.0" x2="288.5" y2="154.5" stroke="#999" stroke-width="1"/><line x1="293.5" y1="153.0" x2="293.5" y2="154.5" stroke="#999" stroke-width="1"/><line x1="299.5" y1="151.5" x2="299.5" y2="154.5" stroke="#777" stroke-width="1"/><line x1="305.5" y1="153.0" x2="305.5" y2="154.5" stroke="#999" stroke-width="1"/><line x1="310.5" y1="153.0" x2="310.5" y2="154.5" stroke="#999" stroke-width="1"/><line x1="316.5" y1="153.0" x2="316.5" y2="154.5" stroke="#999" stroke-width="1"/><line x1="322.5" y1="153.0" x2="322.5" y2="154.5" stroke="#999" stroke-width="1"/><line x1="327.5" y1="148.5" x2="327.5" y2="154.5" stroke="#444" stroke-width="1"/><line x1="333.5" y1="153.0" x2="333.5" y2="154.5" stroke="#999" stroke-width="1"/><line x1="339.5" y1="153.0" x2="339.5" y2="154.5" stroke="#999" stroke-width="1"/><line x1="344.5" y1="153.0" x2="344.5" y2="154.5" stroke="#999" stroke-width="1"/><line x1="350.5" y1="153.0" x2="350.5" y2="154.5" stroke="#999" stroke-width="1"/><line x1="356.5" y1="151.5" x2="356.5" y2="154.5" stroke="#777" stroke-width="1"/><line x1="361.5" y1="153.0" x2="361.5" y2="154.5" stroke="#999" stroke-width="1"/><line x1="367.5" y1="153.0" x2="367.5" y2="154.5" stroke="#999" stroke-width="1"/><line x1="373.5" y1="153.0" x2="373.5" y2="154.5" stroke="#999" stroke-width="1"/><line x1="378.5" y1="153.0" x2="378.5" y2="154.5" stroke="#999" stroke-width="1"/><line x1="384.5" y1="148.5" x2="384.5" y2="154.5" stroke="#444" stroke-width="1"/><line x1="390.5" y1="153.0" x2="390.5" y2="154.5" stroke="#999" stroke-width="1"/><line x1="395.5" y1="153.0" x2="395.5" y2="154.5" stroke="#999" stroke-width="1"/><line x1="401.5" y1="153.0" x2="401.5" y2="154.5" stroke="#999" stroke-width="1"/><line x1="407.5" y1="153.0" x2="407.5" y2="154.5" stroke="#999" stroke-width="1"/><line x1="412.5" y1="151.5" x2="412.5" y2="154.5" stroke="#777" stroke-width="1"/><line x1="418.5" y1="153.0" x2="418.5" y2="154.5" stroke="#999" stroke-width="1"/><line x1="424.5" y1="153.0" x2="424.5" y2="154.5" stroke="#999" stroke-width="1"/><line x1="429.5" y1="153.0" x2="429.5" y2="154.5" stroke="#999" stroke-width="1"/><line x1="435.5" y1="153.0" x2="435.5" y2="154.5" stroke="#999" stroke-width="1"/><line x1="441.5" y1="148.5" x2="441.5" y2="154.5" stroke="#444" stroke-width="1"/><line x1="446.5" y1="153.0" x2="446.5" y2="154.5" stroke="#999" stroke-width="1"/><line x1="452.5" y1="153.0" x2="452.5" y2="154.5" stroke="#999" stroke-width="1"/><line x1="458.5" y1="153.0" x2="458.5" y2="154.5" stroke="#999" stroke-width="1"/><line x1="463.5" y1="153.0" x2="463.5" y2="154.5" stroke="#999" stroke-width="1"/><line x1="469.5" y1="151.5" x2="469.5" y2="154.5" stroke="#777" stroke-width="1"/><line x1="475.5" y1="153.0" x2="475.5" y2="154.5" stroke="#999" stroke-width="1"/><line x1="480.5" y1="153.0" x2="480.5" y2="154.5" stroke="#999" stroke-width="1"/><line x1="486.5" y1="153.0" x2="486.5" y2="154.5" stroke="#999" stroke-width="1"/><line x1="492.5" y1="153.0" x2="492.5" y2="154.5" stroke="#999" stroke-width="1"/><line x1="497.5" y1="148.5" x2="497.5" y2="154.5" stroke="#444" stroke-width="1"/><line x1="503.5" y1="153.0" x2="503.5" y2="154.5" stroke="#999" stroke-width="1"/><line x1="509.5" y1="153.0" x2="509.5" y2="154.5" stroke="#999" stroke-width="1"/><line x1="514.5" y1="153.0" x2="514.5" y2="154.5" stroke="#999" stroke-width="1"/><line x1="520.5" y1="153.0" x2="520.5" y2="154.5" stroke="#999" stroke-width="1"/><line x1="526.5" y1="151.5" x2="526.5" y2="154.5" stroke="#777" stroke-width="1"/><line x1="531.5" y1="153.0" x2="531.5" y2="154.5" stroke="#999" stroke-width="1"/><line x1="537.5" y1="153.0" x2="537.5" y2="154.5" stroke="#999" stroke-width="1"/><line x1="543.5" y1="153.0" x2="543.5" y2="154.5" stroke="#999" stroke-width="1"/><line x1="548.5" y1="153.0" x2="548.5" y2="154.5" stroke="#999" stroke-width="1"/><line x1="554.5" y1="148.5" x2="554.5" y2="154.5" stroke="#444" stroke-width="1"/><line x1="560.5" y1="153.0" x2="560.5" y2="154.5" stroke="#999" stroke-width="1"/><line x1="565.5" y1="153.0" x2="565.5" y2="154.5" stroke="#999" stroke-width="1"/><line x1="571.5" y1="153.0" x2="571.5" y2="154.5" stroke="#999" stroke-width="1"/><line x1="577.5" y1="153.0" x2="577.5" y2="154.5" stroke="#999" stroke-width="1"/><line x1="582.5" y1="151.5" x2="582.5" y2="154.5" stroke="#777" stroke-width="1"/><line x1="588.5" y1="153.0" x2="588.5" y2="154.5" stroke="#999" stroke-width="1"/><line x1="594.5" y1="153.0" x2="594.5" y2="154.5" stroke="#999" stroke-width="1"/><line x1="599.5" y1="153.0" x2="599.5" y2="154.5" stroke="#999" stroke-width="1"/><line x1="605.5" y1="153.0" x2="605.5" y2="154.5" stroke="#999" stroke-width="1"/><line x1="611.5" y1="148.5" x2="611.5" y2="154.5" stroke="#444" stroke-width="1"/><line x1="616.5" y1="153.0" x2="616.5" y2="154.5" stroke="#999" stroke-width="1"/><line x1="622.5" y1="153.0" x2="622.5" y2="154.5" stroke="#999" stroke-width="1"/><line x1="628.5" y1="153.0" x2="628.5" y2="154.5" stroke="#999" stroke-width="1"/><line x1="633.5" y1="153.0" x2="633.5" y2="154.5" stroke="#999" stroke-width="1"/><line x1="639.5" y1="151.5" x2="639.5" y2="154.5" stroke="#777" stroke-width="1"/><line x1="645.5" y1="153.0" x2="645.5" y2="154.5" stroke="#999" stroke-width="1"/><line x1="650.5" y1="153.0" x2="650.5" y2="154.5" stroke="#999" stroke-width="1"/><line x1="656.5" y1="153.0" x2="656.5" y2="154.5" stroke="#999" stroke-width="1"/><line x1="662.5" y1="153.0" x2="662.5" y2="154.5" stroke="#999" stroke-width="1"/><line x1="667.5" y1="148.5" x2="667.5" y2="154.5" stroke="#444" stroke-width="1"/><line x1="673.5" y1="153.0" x2="673.5" y2="154.5" stroke="#999" stroke-width="1"/><line x1="679.5" y1="153.0" x2="679.5" y2="154.5" stroke="#999" stroke-width="1"/><line x1="684.5" y1="153.0" x2="684.5" y2="154.5" stroke="#999" stroke-width="1"/><line x1="690.5" y1="153.0" x2="690.5" y2="154.5" stroke="#999" stroke-width="1"/><line x1="696.5" y1="151.5" x2="696.5" y2="154.5" stroke="#777" stroke-width="1"/><line x1="701.5" y1="153.0" x2="701.5" y2="154.5" stroke="#999" stroke-width="1"/><line x1="707.5" y1="153.0" x2="707.5" y2="154.5" stroke="#999" stroke-width="1"/><line x1="713.5" y1="153.0" x2="713.5" y2="154.5" stroke="#999" stroke-width="1"/><line x1="718.5" y1="153.0" x2="718.5" y2="154.5" stroke="#999" stroke-width="1"/><line x1="724.5" y1="148.5" x2="724.5" y2="154.5" stroke="#444" stroke-width="1"/><line x1="730.5" y1="153.0" x2="730.5" y2="154.5" stroke="#999" stroke-width="1"/><line x1="735.5" y1="153.0" x2="735.5" y2="154.5" stroke="#999" stroke-width="1"/><line x1="741.5" y1="153.0" x2="741.5" y2="154.5" stroke="#999" stroke-width="1"/><line x1="747.5" y1="153.0" x2="747.5" y2="154.5" stroke="#999" stroke-width="1"/><line x1="752.5" y1="151.5" x2="752.5" y2="154.5" stroke="#777" stroke-width="1"/><line x1="758.5" y1="153.0" x2="758.5" y2="154.5" stroke="#999" stroke-width="1"/><line x1="764.5" y1="153.0" x2="764.5" y2="154.5" stroke="#999" stroke-width="1"/><line x1="769.5" y1="153.0" x2="769.5" y2="154.5" stroke="#999" stroke-width="1"/><line x1="775.5" y1="153.0" x2="775.5" y2="154.5" stroke="#999" stroke-width="1"/><line x1="780.5" y1="148.5" x2="780.5" y2="154.5" stroke="#444" stroke-width="1"/><line x1="786.5" y1="153.0" x2="786.5" y2="154.5" stroke="#999" stroke-width="1"/><line x1="792.5" y1="153.0" x2="792.5" y2="154.5" stroke="#999" stroke-width="1"/><line x1="797.5" y1="153.0" x2="797.5" y2="154.5" stroke="#999" stroke-width="1"/><line x1="803.5" y1="153.0" x2="803.5" y2="154.5" stroke="#999" stroke-width="1"/><line x1="809.5" y1="151.5" x2="809.5" y2="154.5" stroke="#777" stroke-width="1"/><line x1="814.5" y1="153.0" x2="814.5" y2="154.5" stroke="#999" stroke-width="1"/><line x1="820.5" y1="153.0" x2="820.5" y2="154.5" stroke="#999" stroke-width="1"/><line x1="826.5" y1="153.0" x2="826.5" y2="154.5" stroke="#999" stroke-width="1"/><line x1="831.5" y1="153.0" x2="831.5" y2="154.5" stroke="#999" stroke-width="1"/><line x1="837.5" y1="148.5" x2="837.5" y2="154.5" stroke="#444" stroke-width="1"/><line x1="843.5" y1="153.0" x2="843.5" y2="154.5" stroke="#999" stroke-width="1"/><line x1="848.5" y1="153.0" x2="848.5" y2="154.5" stroke="#999" stroke-width="1"/><line x1="854.5" y1="153.0" x2="854.5" y2="154.5" stroke="#999" stroke-width="1"/><line x1="860.5" y1="153.0" x2="860.5" y2="154.5" stroke="#999" stroke-width="1"/><line x1="865.5" y1="151.5" x2="865.5" y2="154.5" stroke="#777" stroke-width="1"/><line x1="871.5" y1="153.0" x2="871.5" y2="154.5" stroke="#999" stroke-width="1"/><line x1="877.5" y1="153.0" x2="877.5" y2="154.5" stroke="#999" stroke-width="1"/><line x1="882.5" y1="153.0" x2="882.5" y2="154.5" stroke="#999" stroke-width="1"/><line x1="888.5" y1="153.0" x2="888.5" y2="154.5" stroke="#999" stroke-width="1"/><line x1="894.5" y1="148.5" x2="894.5" y2="154.5" stroke="#444" stroke-width="1"/><line x1="899.5" y1="153.0" x2="899.5" y2="154.5" stroke="#999" stroke-width="1"/><line x1="905.5" y1="153.0" x2="905.5" y2="154.5" stroke="#999" stroke-width="1"/><line x1="911.5" y1="153.0" x2="911.5" y2="154.5" stroke="#999" stroke-width="1"/><line x1="916.5" y1="153.0" x2="916.5" y2="154.5" stroke="#999" stroke-width="1"/><line x1="922.5" y1="151.5" x2="922.5" y2="154.5" stroke="#777" stroke-width="1"/><line x1="928.5" y1="153.0" x2="928.5" y2="154.5" stroke="#999" stroke-width="1"/><line x1="933.5" y1="153.0" x2="933.5" y2="154.5" stroke="#999" stroke-width="1"/><line x1="939.5" y1="153.0" x2="939.5" y2="154.5" stroke="#999" stroke-width="1"/><line x1="945.5" y1="153.0" x2="945.5" y2="154.5" stroke="#999" stroke-width="1"/><line x1="950.5" y1="148.5" x2="950.5" y2="154.5" stroke="#444" stroke-width="1"/><line x1="956.5" y1="153.0" x2="956.5" y2="154.5" stroke="#999" stroke-width="1"/><line x1="962.5" y1="153.0" x2="962.5" y2="154.5" stroke="#999" stroke-width="1"/><line x1="967.5" y1="153.0" x2="967.5" y2="154.5" stroke="#999" stroke-width="1"/><line x1="973.5" y1="153.0" x2="973.5" y2="154.5" stroke="#999" stroke-width="1"/><line x1="979.5" y1="151.5" x2="979.5" y2="154.5" stroke="#777" stroke-width="1"/><line x1="984.5" y1="153.0" x2="984.5" y2="154.5" stroke="#999" stroke-width="1"/><line x1="990.5" y1="153.0" x2="990.5" y2="154.5" stroke="#999" stroke-width="1"/><line x1="996.5" y1="153.0" x2="996.5" y2="154.5" stroke="#999" stroke-width="1"/><line x1="1001.5" y1="153.0" x2="1001.5" y2="154.5" stroke="#999" stroke-width="1"/><line x1="1007.5" y1="148.5" x2="1007.5" y2="154.5" stroke="#444" stroke-width="1"/><line x1="1013.5" y1="153.0" x2="1013.5" y2="154.5" stroke="#999" stroke-width="1"/><line x1="1018.5" y1="153.0" x2="1018.5" y2="154.5" stroke="#999" stroke-width="1"/><line x1="1024.5" y1="153.0" x2="1024.5" y2="154.5" stroke="#999" stroke-width="1"/><line x1="1030.5" y1="153.0" x2="1030.5" y2="154.5" stroke="#999" stroke-width="1"/><line x1="1035.5" y1="151.5" x2="1035.5" y2="154.5" stroke="#777" stroke-width="1"/><line x1="1041.5" y1="153.0" x2="1041.5" y2="154.5" stroke="#999" stroke-width="1"/><line x1="1047.5" y1="153.0" x2="1047.5" y2="154.5" stroke="#999" stroke-width="1"/><line x1="1052.5" y1="153.0" x2="1052.5" y2="154.5" stroke="#999" stroke-width="1"/><line x1="1058.5" y1="153.0" x2="1058.5" y2="154.5" stroke="#999" stroke-width="1"/><line x1="1064.5" y1="148.5" x2="1064.5" y2="154.5" stroke="#444" stroke-width="1"/><line x1="1069.5" y1="153.0" x2="1069.5" y2="154.5" stroke="#999" stroke-width="1"/><line x1="1075.5" y1="153.0" x2="1075.5" y2="154.5" stroke="#999" stroke-width="1"/><line x1="1081.5" y1="153.0" x2="1081.5" y2="154.5" stroke="#999" stroke-width="1"/><line x1="1086.5" y1="153.0" x2="1086.5" y2="154.5" stroke="#999" stroke-width="1"/><line x1="1092.5" y1="151.5" x2="1092.5" y2="154.5" stroke="#777" stroke-width="1"/><line x1="1098.5" y1="153.0" x2="1098.5" y2="154.5" stroke="#999" stroke-width="1"/><line x1="1103.5" y1="153.0" x2="1103.5" y2="154.5" stroke="#999" stroke-width="1"/><line x1="1109.5" y1="153.0" x2="1109.5" y2="154.5" stroke="#999" stroke-width="1"/><line x1="1115.5" y1="153.0" x2="1115.5" y2="154.5" stroke="#999" stroke-width="1"/><line x1="1120.5" y1="148.5" x2="1120.5" y2="154.5" stroke="#444" stroke-width="1"/><line x1="1126.5" y1="153.0" x2="1126.5" y2="154.5" stroke="#999" stroke-width="1"/><line x1="1132.5" y1="153.0" x2="1132.5" y2="154.5" stroke="#999" stroke-width="1"/><line x1="1137.5" y1="153.0" x2="1137.5" y2="154.5" stroke="#999" stroke-width="1"/><line x1="1143.5" y1="153.0" x2="1143.5" y2="154.5" stroke="#999" stroke-width="1"/><line x1="1149.5" y1="151.5" x2="1149.5" y2="154.5" stroke="#777" stroke-width="1"/><line x1="1154.5" y1="153.0" x2="1154.5" y2="154.5" stroke="#999" stroke-width="1"/><line x1="1160.5" y1="153.0" x2="1160.5" y2="154.5" stroke="#999" stroke-width="1"/><line x1="1166.5" y1="153.0" x2="1166.5" y2="154.5" stroke="#999" stroke-width="1"/><line x1="1171.5" y1="153.0" x2="1171.5" y2="154.5" stroke="#999" stroke-width="1"/><line x1="1177.5" y1="148.5" x2="1177.5" y2="154.5" stroke="#444" stroke-width="1"/><line x1="1183.5" y1="153.0" x2="1183.5" y2="154.5" stroke="#999" stroke-width="1"/><line x1="1188.5" y1="153.0" x2="1188.5" y2="154.5" stroke="#999" stroke-width="1"/><line x1="1194.5" y1="153.0" x2="1194.5" y2="154.5" stroke="#999" stroke-width="1"/><line x1="1200.5" y1="153.0" x2="1200.5" y2="154.5" stroke="#999" stroke-width="1"/><line x1="1205.5" y1="151.5" x2="1205.5" y2="154.5" stroke="#777" stroke-width="1"/><line x1="1211.5" y1="153.0" x2="1211.5" y2="154.5" stroke="#999" stroke-width="1"/><line x1="1217.5" y1="153.0" x2="1217.5" y2="154.5" stroke="#999" stroke-width="1"/><line x1="1222.5" y1="153.0" x2="1222.5" y2="154.5" stroke="#999" stroke-width="1"/><line x1="1228.5" y1="153.0" x2="1228.5" y2="154.5" stroke="#999" stroke-width="1"/><line x1="1234.5" y1="148.5" x2="1234.5" y2="154.5" stroke="#444" stroke-width="1"/><line x1="1239.5" y1="153.0" x2="1239.5" y2="154.5" stroke="#999" stroke-width="1"/><line x1="1245.5" y1="153.0" x2="1245.5" y2="154.5" stroke="#999" stroke-width="1"/><line x1="1251.5" y1="153.0" x2="1251.5" y2="154.5" stroke="#999" stroke-width="1"/><line x1="1256.5" y1="153.0" x2="1256.5" y2="154.5" stroke="#999" stroke-width="1"/><line x1="47.0" y1="826.5" x2="48.5" y2="826.5" stroke="#999" stroke-width="1"/><line x1="47.0" y1="821.5" x2="48.5" y2="821.5" stroke="#999" stroke-width="1"/><line x1="42.5" y1="815.5" x2="48.5" y2="815.5" stroke="#444" stroke-width="1"/><line x1="47.0" y1="809.5" x2="48.5" y2="809.5" stroke="#999" stroke-width="1"/><line x1="47.0" y1="804.5" x2="48.5" y2="804.5" stroke="#999" stroke-width="1"/><line x1="47.0" y1="798.5" x2="48.5" y2="798.5" stroke="#999" stroke-width="1"/><line x1="47.0" y1="792.5" x2="48.5" y2="792.5" stroke="#999" stroke-width="1"/><line x1="45.5" y1="787.5" x2="48.5" y2="787.5" stroke="#777" stroke-width="1"/><line x1="47.0" y1="781.5" x2="48.5" y2="781.5" stroke="#999" stroke-width="1"/><line x1="47.0" y1="775.5" x2="48.5" y2="775.5" stroke="#999" stroke-width="1"/><line x1="47.0" y1="770.5" x2="48.5" y2="770.5" stroke="#999" stroke-width="1"/><line x1="47.0" y1="764.5" x2="48.5" y2="764.5" stroke="#999" stroke-width="1"/><line x1="42.5" y1="758.5" x2="48.5" y2="758.5" stroke="#444" stroke-width="1"/><line x1="47.0" y1="753.5" x2="48.5" y2="753.5" stroke="#999" stroke-width="1"/><line x1="47.0" y1="747.5" x2="48.5" y2="747.5" stroke="#999" stroke-width="1"/><line x1="47.0" y1="741.5" x2="48.5" y2="741.5" stroke="#999" stroke-width="1"/><line x1="47.0" y1="736.5" x2="48.5" y2="736.5" stroke="#999" stroke-width="1"/><line x1="45.5" y1="730.5" x2="48.5" y2="730.5" stroke="#777" stroke-width="1"/><line x1="47.0" y1="724.5" x2="48.5" y2="724.5" stroke="#999" stroke-width="1"/><line x1="47.0" y1="719.5" x2="48.5" y2="719.5" stroke="#999" stroke-width="1"/><line x1="47.0" y1="713.5" x2="48.5" y2="713.5" stroke="#999" stroke-width="1"/><line x1="47.0" y1="707.5" x2="48.5" y2="707.5" stroke="#999" stroke-width="1"/><line x1="42.5" y1="702.5" x2="48.5" y2="702.5" stroke="#444" stroke-width="1"/><line x1="47.0" y1="696.5" x2="48.5" y2="696.5" stroke="#999" stroke-width="1"/><line x1="47.0" y1="690.5" x2="48.5" y2="690.5" stroke="#999" stroke-width="1"/><line x1="47.0" y1="685.5" x2="48.5" y2="685.5" stroke="#999" stroke-width="1"/><line x1="47.0" y1="679.5" x2="48.5" y2="679.5" stroke="#999" stroke-width="1"/><line x1="45.5" y1="673.5" x2="48.5" y2="673.5" stroke="#777" stroke-width="1"/><line x1="47.0" y1="668.5" x2="48.5" y2="668.5" stroke="#999" stroke-width="1"/><line x1="47.0" y1="662.5" x2="48.5" y2="662.5" stroke="#999" stroke-width="1"/><line x1="47.0" y1="656.5" x2="48.5" y2="656.5" stroke="#999" stroke-width="1"/><line x1="47.0" y1="651.5" x2="48.5" y2="651.5" stroke="#999" stroke-width="1"/><line x1="42.5" y1="645.5" x2="48.5" y2="645.5" stroke="#444" stroke-width="1"/><line x1="47.0" y1="639.5" x2="48.5" y2="639.5" stroke="#999" stroke-width="1"/><line x1="47.0" y1="634.5" x2="48.5" y2="634.5" stroke="#999" stroke-width="1"/><line x1="47.0" y1="628.5" x2="48.5" y2="628.5" stroke="#999" stroke-width="1"/><line x1="47.0" y1="622.5" x2="48.5" y2="622.5" stroke="#999" stroke-width="1"/><line x1="45.5" y1="617.5" x2="48.5" y2="617.5" stroke="#777" stroke-width="1"/><line x1="47.0" y1="611.5" x2="48.5" y2="611.5" stroke="#999" stroke-width="1"/><line x1="47.0" y1="605.5" x2="48.5" y2="605.5" stroke="#999" stroke-width="1"/><line x1="47.0" y1="600.5" x2="48.5" y2="600.5" stroke="#999" stroke-width="1"/><line x1="47.0" y1="594.5" x2="48.5" y2="594.5" stroke="#999" stroke-width="1"/><line x1="42.5" y1="588.5" x2="48.5" y2="588.5" stroke="#444" stroke-width="1"/><line x1="47.0" y1="583.5" x2="48.5" y2="583.5" stroke="#999" stroke-width="1"/><line x1="47.0" y1="577.5" x2="48.5" y2="577.5" stroke="#999" stroke-width="1"/><line x1="47.0" y1="571.5" x2="48.5" y2="571.5" stroke="#999" stroke-width="1"/><line x1="47.0" y1="566.5" x2="48.5" y2="566.5" stroke="#999" stroke-width="1"/><line x1="45.5" y1="560.5" x2="48.5" y2="560.5" stroke="#777" stroke-width="1"/><line x1="47.0" y1="554.5" x2="48.5" y2="554.5" stroke="#999" stroke-width="1"/><line x1="47.0" y1="549.5" x2="48.5" y2="549.5" stroke="#999" stroke-width="1"/><line x1="47.0" y1="543.5" x2="48.5" y2="543.5" stroke="#999" stroke-width="1"/><line x1="47.0" y1="537.5" x2="48.5" y2="537.5" stroke="#999" stroke-width="1"/><line x1="42.5" y1="532.5" x2="48.5" y2="532.5" stroke="#444" stroke-width="1"/><line x1="47.0" y1="526.5" x2="48.5" y2="526.5" stroke="#999" stroke-width="1"/><line x1="47.0" y1="520.5" x2="48.5" y2="520.5" stroke="#999" stroke-width="1"/><line x1="47.0" y1="515.5" x2="48.5" y2="515.5" stroke="#999" stroke-width="1"/><line x1="47.0" y1="509.5" x2="48.5" y2="509.5" stroke="#999" stroke-width="1"/><line x1="45.5" y1="503.5" x2="48.5" y2="503.5" stroke="#777" stroke-width="1"/><line x1="47.0" y1="498.5" x2="48.5" y2="498.5" stroke="#999" stroke-width="1"/><line x1="47.0" y1="492.5" x2="48.5" y2="492.5" stroke="#999" stroke-width="1"/><line x1="47.0" y1="486.5" x2="48.5" y2="486.5" stroke="#999" stroke-width="1"/><line x1="47.0" y1="481.5" x2="48.5" y2="481.5" stroke="#999" stroke-width="1"/><line x1="42.5" y1="475.5" x2="48.5" y2="475.5" stroke="#444" stroke-width="1"/><line x1="47.0" y1="469.5" x2="48.5" y2="469.5" stroke="#999" stroke-width="1"/><line x1="47.0" y1="464.5" x2="48.5" y2="464.5" stroke="#999" stroke-width="1"/><line x1="47.0" y1="458.5" x2="48.5" y2="458.5" stroke="#999" stroke-width="1"/><line x1="47.0" y1="452.5" x2="48.5" y2="452.5" stroke="#999" stroke-width="1"/><line x1="45.5" y1="447.5" x2="48.5" y2="447.5" stroke="#777" stroke-width="1"/><line x1="47.0" y1="441.5" x2="48.5" y2="441.5" stroke="#999" stroke-width="1"/><line x1="47.0" y1="435.5" x2="48.5" y2="435.5" stroke="#999" stroke-width="1"/><line x1="47.0" y1="430.5" x2="48.5" y2="430.5" stroke="#999" stroke-width="1"/><line x1="47.0" y1="424.5" x2="48.5" y2="424.5" stroke="#999" stroke-width="1"/><line x1="42.5" y1="418.5" x2="48.5" y2="418.5" stroke="#444" stroke-width="1"/><line x1="47.0" y1="413.5" x2="48.5" y2="413.5" stroke="#999" stroke-width="1"/><line x1="47.0" y1="407.5" x2="48.5" y2="407.5" stroke="#999" stroke-width="1"/><line x1="47.0" y1="401.5" x2="48.5" y2="401.5" stroke="#999" stroke-width="1"/><line x1="47.0" y1="396.5" x2="48.5" y2="396.5" stroke="#999" stroke-width="1"/><line x1="45.5" y1="390.5" x2="48.5" y2="390.5" stroke="#777" stroke-width="1"/><line x1="47.0" y1="384.5" x2="48.5" y2="384.5" stroke="#999" stroke-width="1"/><line x1="47.0" y1="379.5" x2="48.5" y2="379.5" stroke="#999" stroke-width="1"/><line x1="47.0" y1="373.5" x2="48.5" y2="373.5" stroke="#999" stroke-width="1"/><line x1="47.0" y1="367.5" x2="48.5" y2="367.5" stroke="#999" stroke-width="1"/><line x1="42.5" y1="362.5" x2="48.5" y2="362.5" stroke="#444" stroke-width="1"/><line x1="47.0" y1="356.5" x2="48.5" y2="356.5" stroke="#999" stroke-width="1"/><line x1="47.0" y1="350.5" x2="48.5" y2="350.5" stroke="#999" stroke-width="1"/><line x1="47.0" y1="345.5" x2="48.5" y2="345.5" stroke="#999" stroke-width="1"/><line x1="47.0" y1="339.5" x2="48.5" y2="339.5" stroke="#999" stroke-width="1"/><line x1="45.5" y1="333.5" x2="48.5" y2="333.5" stroke="#777" stroke-width="1"/><line x1="47.0" y1="328.5" x2="48.5" y2="328.5" stroke="#999" stroke-width="1"/><line x1="47.0" y1="322.5" x2="48.5" y2="322.5" stroke="#999" stroke-width="1"/><line x1="47.0" y1="316.5" x2="48.5" y2="316.5" stroke="#999" stroke-width="1"/><line x1="47.0" y1="311.5" x2="48.5" y2="311.5" stroke="#999" stroke-width="1"/><line x1="42.5" y1="305.5" x2="48.5" y2="305.5" stroke="#444" stroke-width="1"/><line x1="47.0" y1="299.5" x2="48.5" y2="299.5" stroke="#999" stroke-width="1"/><line x1="47.0" y1="294.5" x2="48.5" y2="294.5" stroke="#999" stroke-width="1"/><line x1="47.0" y1="288.5" x2="48.5" y2="288.5" stroke="#999" stroke-width="1"/><line x1="47.0" y1="282.5" x2="48.5" y2="282.5" stroke="#999" stroke-width="1"/><line x1="45.5" y1="277.5" x2="48.5" y2="277.5" stroke="#777" stroke-width="1"/><line x1="47.0" y1="271.5" x2="48.5" y2="271.5" stroke="#999" stroke-width="1"/><line x1="47.0" y1="265.5" x2="48.5" y2="265.5" stroke="#999" stroke-width="1"/><line x1="47.0" y1="260.5" x2="48.5" y2="260.5" stroke="#999" stroke-width="1"/><line x1="47.0" y1="254.5" x2="48.5" y2="254.5" stroke="#999" stroke-width="1"/><line x1="42.5" y1="248.5" x2="48.5" y2="248.5" stroke="#444" stroke-width="1"/><line x1="47.0" y1="243.5" x2="48.5" y2="243.5" stroke="#999" stroke-width="1"/><line x1="47.0" y1="237.5" x2="48.5" y2="237.5" stroke="#999" stroke-width="1"/><line x1="47.0" y1="232.5" x2="48.5" y2="232.5" stroke="#999" stroke-width="1"/><line x1="47.0" y1="226.5" x2="48.5" y2="226.5" stroke="#999" stroke-width="1"/><line x1="45.5" y1="220.5" x2="48.5" y2="220.5" stroke="#777" stroke-width="1"/><line x1="47.0" y1="215.5" x2="48.5" y2="215.5" stroke="#999" stroke-width="1"/><line x1="47.0" y1="209.5" x2="48.5" y2="209.5" stroke="#999" stroke-width="1"/><line x1="47.0" y1="203.5" x2="48.5" y2="203.5" stroke="#999" stroke-width="1"/><line x1="47.0" y1="198.5" x2="48.5" y2="198.5" stroke="#999" stroke-width="1"/><line x1="42.5" y1="192.5" x2="48.5" y2="192.5" stroke="#444" stroke-width="1"/><line x1="47.0" y1="186.5" x2="48.5" y2="186.5" stroke="#999" stroke-width="1"/><line x1="47.0" y1="181.5" x2="48.5" y2="181.5" stroke="#999" stroke-width="1"/><line x1="47.0" y1="175.5" x2="48.5" y2="175.5" stroke="#999" stroke-width="1"/><line x1="47.0" y1="169.5" x2="48.5" y2="169.5" stroke="#999" stroke-width="1"/><line x1="45.5" y1="164.5" x2="48.5" y2="164.5" stroke="#777" stroke-width="1"/><line x1="47.0" y1="158.5" x2="48.5" y2="158.5" stroke="#999" stroke-width="1"/></svg>
<div class="rl" style="left:87.2px;top:137.5px;width:30px;text-align:center">40</div>
<div class="rl" style="left:143.8px;top:137.5px;width:30px;text-align:center">20</div>
<div class="rl" style="left:200.5px;top:137.5px;width:30px;text-align:center">0</div>
<div class="rl" style="left:257.1px;top:137.5px;width:30px;text-align:center">20</div>
<div class="rl" style="left:313.8px;top:137.5px;width:30px;text-align:center">40</div>
<div class="rl" style="left:370.4px;top:137.5px;width:30px;text-align:center">60</div>
<div class="rl" style="left:427.1px;top:137.5px;width:30px;text-align:center">80</div>
<div class="rl" style="left:483.8px;top:137.5px;width:30px;text-align:center">100</div>
<div class="rl" style="left:540.4px;top:137.5px;width:30px;text-align:center">120</div>
<div class="rl" style="left:597.0px;top:137.5px;width:30px;text-align:center">140</div>
<div class="rl" style="left:653.7px;top:137.5px;width:30px;text-align:center">160</div>
<div class="rl" style="left:710.4px;top:137.5px;width:30px;text-align:center">180</div>
<div class="rl" style="left:767.0px;top:137.5px;width:30px;text-align:center">200</div>
<div class="rl" style="left:823.6px;top:137.5px;width:30px;text-align:center">220</div>
<div class="rl" style="left:880.3px;top:137.5px;width:30px;text-align:center">240</div>
<div class="rl" style="left:937.0px;top:137.5px;width:30px;text-align:center">260</div>
<div class="rl" style="left:993.6px;top:137.5px;width:30px;text-align:center">280</div>
<div class="rl" style="left:1050.2px;top:137.5px;width:30px;text-align:center">300</div>
<div class="rl" style="left:1106.9px;top:137.5px;width:30px;text-align:center">320</div>
<div class="rl" style="left:1163.5px;top:137.5px;width:30px;text-align:center">340</div>
<div class="rl" style="left:1237px;top:139px;color:#666">毫米</div>
<div class="rl" style="left:24.5px;top:807.0px;width:30px;height:12px;text-align:center;transform:rotate(-90deg)">0</div>
<div class="rl" style="left:24.5px;top:750.4px;width:30px;height:12px;text-align:center;transform:rotate(-90deg)">20</div>
<div class="rl" style="left:24.5px;top:693.7px;width:30px;height:12px;text-align:center;transform:rotate(-90deg)">40</div>
<div class="rl" style="left:24.5px;top:637.0px;width:30px;height:12px;text-align:center;transform:rotate(-90deg)">60</div>
<div class="rl" style="left:24.5px;top:580.4px;width:30px;height:12px;text-align:center;transform:rotate(-90deg)">80</div>
<div class="rl" style="left:24.5px;top:523.8px;width:30px;height:12px;text-align:center;transform:rotate(-90deg)">100</div>
<div class="rl" style="left:24.5px;top:467.1px;width:30px;height:12px;text-align:center;transform:rotate(-90deg)">120</div>
<div class="rl" style="left:24.5px;top:410.4px;width:30px;height:12px;text-align:center;transform:rotate(-90deg)">140</div>
<div class="rl" style="left:24.5px;top:353.8px;width:30px;height:12px;text-align:center;transform:rotate(-90deg)">160</div>
<div class="rl" style="left:24.5px;top:297.1px;width:30px;height:12px;text-align:center;transform:rotate(-90deg)">180</div>
<div class="rl" style="left:24.5px;top:240.5px;width:30px;height:12px;text-align:center;transform:rotate(-90deg)">200</div>
<div class="rl" style="left:24.5px;top:183.9px;width:30px;height:12px;text-align:center;transform:rotate(-90deg)">220</div>
<svg style="left:34px;top:140px" width="14" height="14"><path d="M2.5 2.5v9M2.5 2.5h9M4 4l6 6M7 10h3v-3" fill="none" stroke="#999" stroke-width="1"/></svg>
<svg style="left:62px;top:138px" width="8" height="17"><line x1="4.5" y1="1" x2="4.5" y2="16" stroke="#222" stroke-dasharray="2 2"/></svg>
<div class="abs" style="left:49px;top:155px;width:1213px;height:677px;background:#fff"></div>
<div class="abs" style="left:219px;top:224px;width:843px;height:596px;background:#c4c4c4"></div>
<div class="abs" style="left:214px;top:219px;width:843px;height:597px;background:#fff;border:1px solid #8f8f8f"></div>
<svg style="left:0;top:0" width="1280" height="832"><circle cx="619.5" cy="516" r="286" fill="none" stroke="#000" stroke-width="1"/><path d="M950.5 769.5L709 581.5" stroke="#dc1414" stroke-width="5" stroke-linecap="round"/><path d="M730.5 584L707 579.5L716.5 600.5" fill="none" stroke="#dc1414" stroke-width="5" stroke-linecap="round" stroke-linejoin="round"/><rect x="323" y="220" width="8" height="8" fill="#000"/><rect x="323" y="512" width="8" height="8" fill="#000"/><rect x="323" y="804" width="8" height="8" fill="#000"/><rect x="615" y="220" width="8" height="8" fill="#000"/><rect x="615" y="804" width="8" height="8" fill="#000"/><rect x="907" y="220" width="8" height="8" fill="#000"/><rect x="907" y="512" width="8" height="8" fill="#000"/><rect x="907" y="804" width="8" height="8" fill="#000"/><path d="M616.5 513.5l5 5M621.5 513.5l-5 5" stroke="#000" stroke-width="2"/><path d="M616.8 231.8L619.2 228.6L621.6 231.8Z" fill="#fff" stroke="#000" stroke-width="1.2"/></svg>
<div class="abs" style="left:1262px;top:118px;width:18px;height:714px;background:#f3f3f3"></div>
<div class="abs" style="left:1245px;top:157px;width:15px;height:15px;background:#f0f0f0"></div>
<svg style="left:1245px;top:157px" width="15" height="15"><path d="M4.5 9.5L7.8 6L11 9.5Z" fill="#222"/></svg>
<div class="abs" style="left:1245px;top:341px;width:15px;height:402px;border:1px solid #8a8a8a;border-radius:2px;background:linear-gradient(90deg,#f4f4f4,#e6e6e6 50%,#c4c4c4)"></div>
<svg style="left:1245px;top:535px" width="15" height="12"><path d="M4 3.5h6M4 6.5h6M4 9.5h6" stroke="#333" stroke-width="1.2"/></svg>
<svg style="left:0;top:0" width="1280" height="832"><rect x="1262.5" y="172.5" width="17" height="17" fill="#fff" stroke="#444"/><path d="M1263 173L1280 190M1280 173L1263 190" stroke="#222" stroke-width="1"/><rect x="1262" y="189.00" width="18" height="17" fill="#26201e"/><line x1="1262" y1="189.00" x2="1280" y2="189.00" stroke="rgba(40,40,40,0.55)" stroke-width="1"/><rect x="1262" y="206.00" width="18" height="17" fill="#3d3939"/><line x1="1262" y1="206.00" x2="1280" y2="206.00" stroke="rgba(40,40,40,0.55)" stroke-width="1"/><rect x="1262" y="223.00" width="18" height="17" fill="#5a5a5a"/><line x1="1262" y1="223.00" x2="1280" y2="223.00" stroke="rgba(40,40,40,0.55)" stroke-width="1"/><rect x="1262" y="240.00" width="18" height="17" fill="#717171"/><line x1="1262" y1="240.00" x2="1280" y2="240.00" stroke="rgba(40,40,40,0.55)" stroke-width="1"/><rect x="1262" y="257.00" width="18" height="17" fill="#878787"/><line x1="1262" y1="257.00" x2="1280" y2="257.00" stroke="rgba(40,40,40,0.55)" stroke-width="1"/><rect x="1262" y="274.00" width="18" height="17" fill="#9d9d9d"/><line x1="1262" y1="274.00" x2="1280" y2="274.00" stroke="rgba(40,40,40,0.55)" stroke-width="1"/><rect x="1262" y="291.00" width="18" height="17" fill="#b2b2b2"/><line x1="1262" y1="291.00" x2="1280" y2="291.00" stroke="rgba(40,40,40,0.55)" stroke-width="1"/><rect x="1262" y="308.00" width="18" height="17" fill="#c6c6c6"/><line x1="1262" y1="308.00" x2="1280" y2="308.00" stroke="rgba(40,40,40,0.55)" stroke-width="1"/><rect x="1262" y="325.00" width="18" height="17" fill="#d9d9d9"/><line x1="1262" y1="325.00" x2="1280" y2="325.00" stroke="rgba(40,40,40,0.55)" stroke-width="1"/><rect x="1262" y="342.00" width="18" height="17" fill="#ebebeb"/><line x1="1262" y1="342.00" x2="1280" y2="342.00" stroke="rgba(40,40,40,0.55)" stroke-width="1"/><rect x="1262" y="359.00" width="18" height="17" fill="#ffffff"/><line x1="1262" y1="359.00" x2="1280" y2="359.00" stroke="rgba(40,40,40,0.55)" stroke-width="1"/><rect x="1262" y="376.00" width="18" height="17" fill="#262a84"/><line x1="1262" y1="376.00" x2="1280" y2="376.00" stroke="rgba(40,40,40,0.55)" stroke-width="1"/><rect x="1262" y="393.00" width="18" height="17" fill="#1d9ad8"/><line x1="1262" y1="393.00" x2="1280" y2="393.00" stroke="rgba(40,40,40,0.55)" stroke-width="1"/><rect x="1262" y="410.00" width="18" height="17" fill="#119c4a"/><line x1="1262" y1="410.00" x2="1280" y2="410.00" stroke="rgba(40,40,40,0.55)" stroke-width="1"/><rect x="1262" y="427.00" width="18" height="17" fill="#fff200"/><line x1="1262" y1="427.00" x2="1280" y2="427.00" stroke="rgba(40,40,40,0.55)" stroke-width="1"/><rect x="1262" y="444.00" width="18" height="17" fill="#e31b23"/><line x1="1262" y1="444.00" x2="1280" y2="444.00" stroke="rgba(40,40,40,0.55)" stroke-width="1"/><rect x="1262" y="461.00" width="18" height="17" fill="#e6007e"/><line x1="1262" y1="461.00" x2="1280" y2="461.00" stroke="rgba(40,40,40,0.55)" stroke-width="1"/><rect x="1262" y="478.00" width="18" height="17" fill="#b04585"/><line x1="1262" y1="478.00" x2="1280" y2="478.00" stroke="rgba(40,40,40,0.55)" stroke-width="1"/><rect x="1262" y="495.00" width="18" height="17" fill="#f7941d"/><line x1="1262" y1="495.00" x2="1280" y2="495.00" stroke="rgba(40,40,40,0.55)" stroke-width="1"/><rect x="1262" y="512.00" width="18" height="17" fill="#f4b5b0"/><line x1="1262" y1="512.00" x2="1280" y2="512.00" stroke="rgba(40,40,40,0.55)" stroke-width="1"/><rect x="1262" y="529.00" width="18" height="17" fill="#8c7466"/><line x1="1262" y1="529.00" x2="1280" y2="529.00" stroke="rgba(40,40,40,0.55)" stroke-width="1"/><rect x="1262" y="546.00" width="18" height="17" fill="#cfcde6"/><line x1="1262" y1="546.00" x2="1280" y2="546.00" stroke="rgba(40,40,40,0.55)" stroke-width="1"/><rect x="1262" y="563.00" width="18" height="17" fill="#a39ccd"/><line x1="1262" y1="563.00" x2="1280" y2="563.00" stroke="rgba(40,40,40,0.55)" stroke-width="1"/><rect x="1262" y="580.00" width="18" height="17" fill="#7b8bc6"/><line x1="1262" y1="580.00" x2="1280" y2="580.00" stroke="rgba(40,40,40,0.55)" stroke-width="1"/><rect x="1262" y="597.00" width="18" height="17" fill="#7a5fa6"/><line x1="1262" y1="597.00" x2="1280" y2="597.00" stroke="rgba(40,40,40,0.55)" stroke-width="1"/><rect x="1262" y="614.00" width="18" height="17" fill="#9b8ab4"/><line x1="1262" y1="614.00" x2="1280" y2="614.00" stroke="rgba(40,40,40,0.55)" stroke-width="1"/><rect x="1262" y="631.00" width="18" height="17" fill="#5a6f98"/><line x1="1262" y1="631.00" x2="1280" y2="631.00" stroke="rgba(40,40,40,0.55)" stroke-width="1"/><rect x="1262" y="648.00" width="18" height="17" fill="#5a5070"/><line x1="1262" y1="648.00" x2="1280" y2="648.00" stroke="rgba(40,40,40,0.55)" stroke-width="1"/><rect x="1262" y="665.00" width="18" height="17" fill="#7a8aab"/><line x1="1262" y1="665.00" x2="1280" y2="665.00" stroke="rgba(40,40,40,0.55)" stroke-width="1"/><rect x="1262" y="682.00" width="18" height="17" fill="#0f8cd8"/><line x1="1262" y1="682.00" x2="1280" y2="682.00" stroke="rgba(40,40,40,0.55)" stroke-width="1"/><rect x="1262" y="699.00" width="18" height="17" fill="#a6d8f2"/><line x1="1262" y1="699.00" x2="1280" y2="699.00" stroke="rgba(40,40,40,0.55)" stroke-width="1"/><rect x="1262" y="716.00" width="18" height="17" fill="#bccbd6"/><line x1="1262" y1="716.00" x2="1280" y2="716.00" stroke="rgba(40,40,40,0.55)" stroke-width="1"/><rect x="1262" y="733.00" width="18" height="17" fill="#95a1a8"/><line x1="1262" y1="733.00" x2="1280" y2="733.00" stroke="rgba(40,40,40,0.55)" stroke-width="1"/><rect x="1262" y="750.00" width="18" height="17" fill="#7b8389"/><line x1="1262" y1="750.00" x2="1280" y2="750.00" stroke="rgba(40,40,40,0.55)" stroke-width="1"/><rect x="1262" y="767.00" width="18" height="17" fill="#4d5459"/><line x1="1262" y1="767.00" x2="1280" y2="767.00" stroke="rgba(40,40,40,0.55)" stroke-width="1"/><rect x="1262" y="784.00" width="18" height="17" fill="#4c7068"/><line x1="1262" y1="784.00" x2="1280" y2="784.00" stroke="rgba(40,40,40,0.55)" stroke-width="1"/><rect x="1262" y="801.00" width="18" height="17" fill="#3b8a78"/><line x1="1262" y1="801.00" x2="1280" y2="801.00" stroke="rgba(40,40,40,0.55)" stroke-width="1"/><rect x="1262" y="818.00" width="18" height="17" fill="#6a8a84"/><line x1="1262" y1="818.00" x2="1280" y2="818.00" stroke="rgba(40,40,40,0.55)" stroke-width="1"/><rect x="1262" y="172" width="1" height="660" fill="#444"/><path d="M1269 129v8l4.5-4Z" fill="#111"/><rect x="1264" y="120" width="1" height="1" fill="#bbb"/><rect x="1264" y="123" width="1" height="1" fill="#bbb"/><rect x="1267" y="120" width="1" height="1" fill="#bbb"/><rect x="1267" y="123" width="1" height="1" fill="#bbb"/><rect x="1270" y="120" width="1" height="1" fill="#bbb"/><rect x="1270" y="123" width="1" height="1" fill="#bbb"/><rect x="1273" y="120" width="1" height="1" fill="#bbb"/><rect x="1273" y="123" width="1" height="1" fill="#bbb"/><rect x="1276" y="120" width="1" height="1" fill="#bbb"/><rect x="1276" y="123" width="1" height="1" fill="#bbb"/><path d="M1268 150l6-6" stroke="#cfcfcf" stroke-width="1.5"/><path d="M1266 166l5-5l5 5" fill="none" stroke="#cccccc" stroke-width="1.2"/></svg>
</body></html>
